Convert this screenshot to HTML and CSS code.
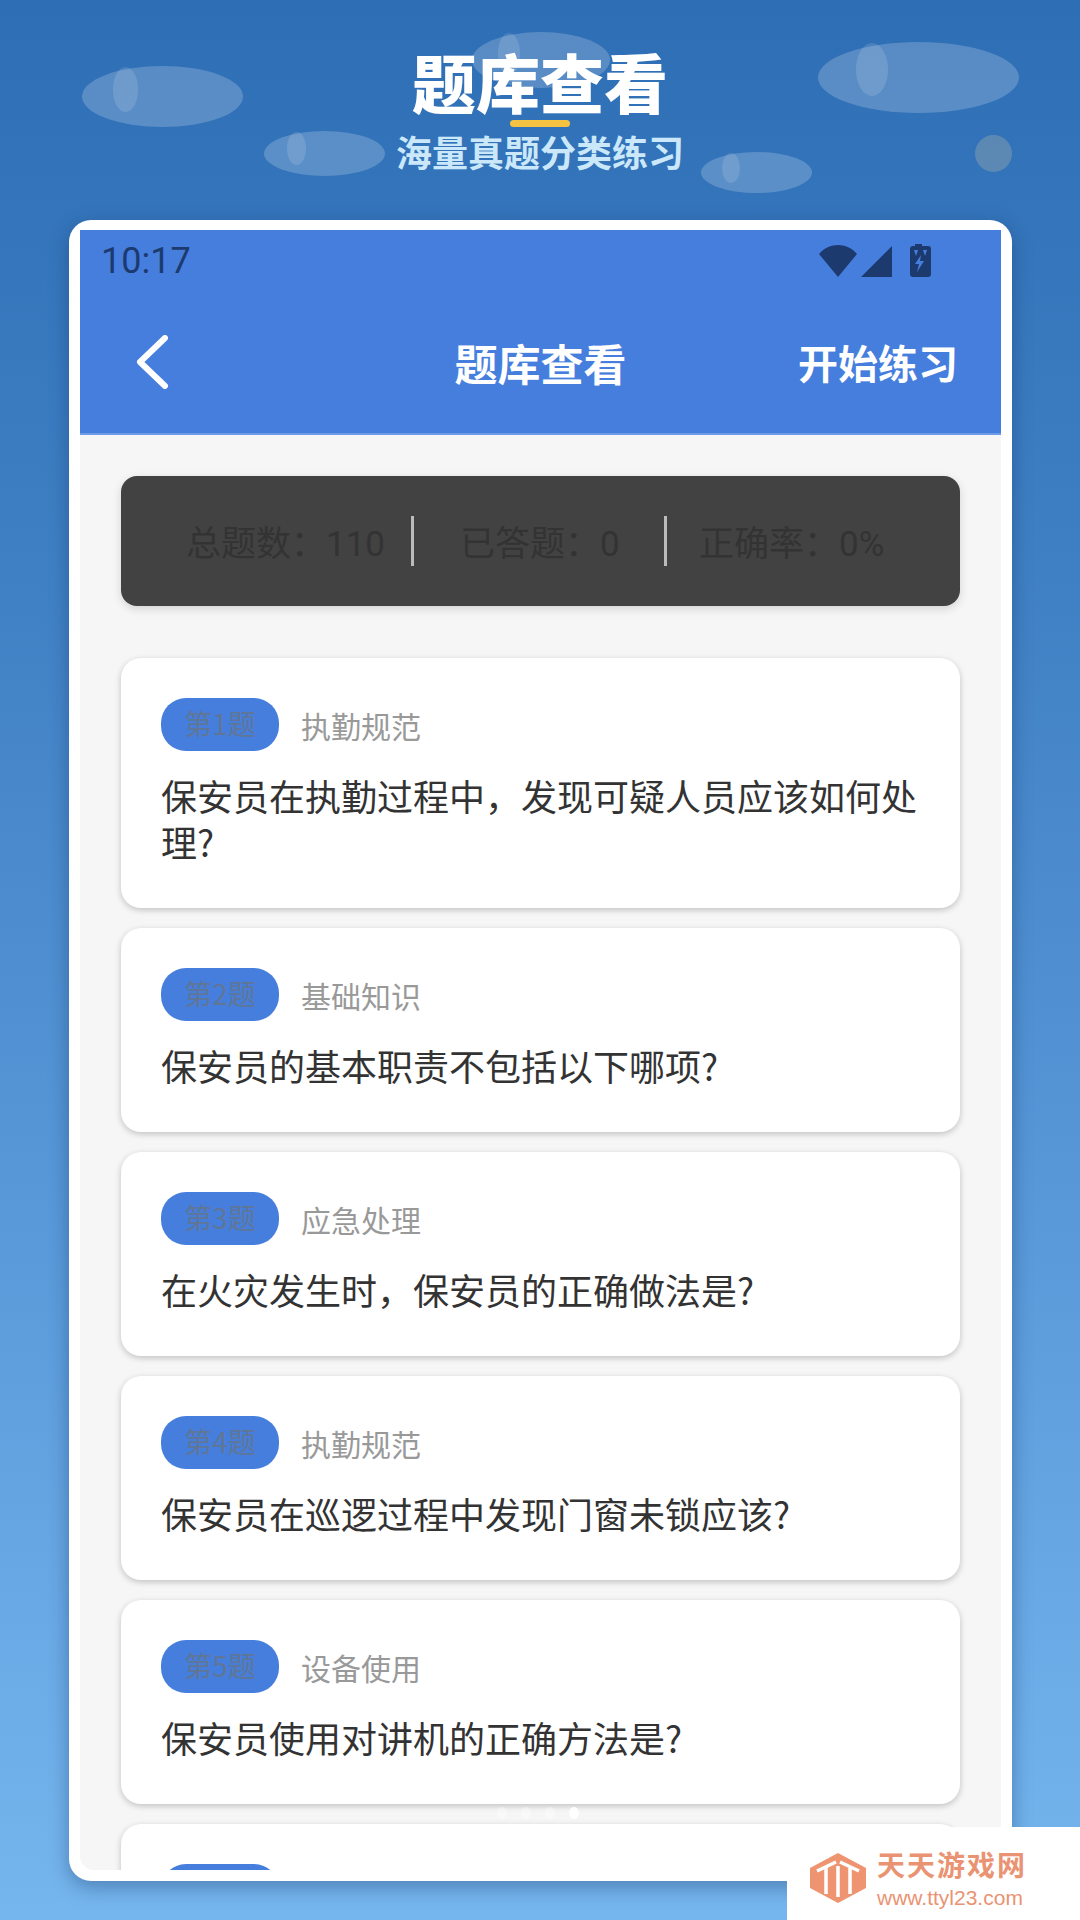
FILE: index.html
```html
<!DOCTYPE html>
<html lang="zh-CN">
<head>
  <meta charset="UTF-8" />
  <meta name="viewport" content="width=device-width, initial-scale=1.0" />
  <title>题库查看</title>
  <link rel="stylesheet" href="styles.css">
</head>
<body>

  <div class="bubble b1"></div>
  <div class="bubble b2"></div>
  <div class="bubble b3"></div>
  <div class="bubble b4"></div>
  <div class="bubble b5"></div>
  <div class="bubble b6"></div>

  <div class="hero">
    <h1>题库查看</h1>
    <div class="hero-line"></div>
    <h2>海量真题分类练习</h2>
  </div>

  <div class="phone">
    <div class="screen">
      <div class="top">
        <div class="status">
          <span class="clock">10:17</span>
          <svg class="status-icons" width="112" height="34" viewBox="0 0 112 34">
            <path d="M0 10 C10 -2 28 -2 38 10 L19 33 Z" />
            <path d="M42 33 L73 2 L73 33 Z" />
            <path fill-rule="evenodd" d="M96 0 H103 V2 H109 Q112 2 112 5 V30 Q112 33 109 33 H94 Q91 33 91 30 V5 Q91 2 94 2 H96 Z M102 11 L96 20 H100 L98 28 L105 17 H101 Z M95 6 L99 6 L97 12 Z M104 6 L108 6 L106 12 Z" />
          </svg>
        </div>
        <div class="nav">
          <svg class="back" width="34" height="54" viewBox="0 0 34 54">
            <path d="M30 3 L5 27 L30 51" />
          </svg>
          <span class="nav-title">题库查看</span>
          <span class="nav-action">开始练习</span>
        </div>
      </div>

      <div class="content">
        <div class="stats">
          <div class="stat">总题数&#xFF1A;<span class="num">110</span></div>
          <div class="stat">已答题&#xFF1A;<span class="num">0</span></div>
          <div class="stat">正确率&#xFF1A;<span class="num">0%</span></div>
        </div>

        <div class="card">
          <div class="card-head">
            <span class="badge">第1题</span>
            <span class="tag">执勤规范</span>
          </div>
          <p class="question">保安员在执勤过程中&#xFF0C;发现可疑人员应该如何处理?</p>
        </div>

        <div class="card">
          <div class="card-head">
            <span class="badge">第2题</span>
            <span class="tag">基础知识</span>
          </div>
          <p class="question">保安员的基本职责不包括以下哪项?</p>
        </div>

        <div class="card">
          <div class="card-head">
            <span class="badge">第3题</span>
            <span class="tag">应急处理</span>
          </div>
          <p class="question">在火灾发生时&#xFF0C;保安员的正确做法是?</p>
        </div>

        <div class="card">
          <div class="card-head">
            <span class="badge">第4题</span>
            <span class="tag">执勤规范</span>
          </div>
          <p class="question">保安员在巡逻过程中发现门窗未锁应该?</p>
        </div>

        <div class="card">
          <div class="card-head">
            <span class="badge">第5题</span>
            <span class="tag">设备使用</span>
          </div>
          <p class="question">保安员使用对讲机的正确方法是?</p>
        </div>

        <div class="card">
          <div class="card-head">
            <span class="badge"></span>
          </div>
        </div>
      </div>
    </div>
  </div>

  <div class="dots">
    <span></span><span></span><span></span><span class="on"></span>
  </div>

  <div class="mark">
    <svg class="mark-logo" width="58" height="50" viewBox="0 0 58 50">
      <path class="hex" d="M29 0 L57 15 V35 L29 50 L1 35 V15 Z" />
      <path class="hex-in" d="M8 18 L27 9 M17 14 V41 M31 9 L50 18 M41 14 V41 M29 13 V44" />
    </svg>
    <div class="mark-text">
      <b>天天游戏网</b>
      <span>www.ttyl23.com</span>
    </div>
  </div>

</body>
</html>
```

FILE: styles.css
```css
body {
  margin: 0;
  width: 1080px;
  height: 1920px;
  position: relative;
  overflow: hidden;
  font-family: "Noto Sans CJK SC", "Noto Sans", sans-serif;
  background: linear-gradient(180deg, #2e6eb5 0%, #3f80c4 30%, #5a9ada 65%, #76b6ee 100%);
}

/* bubbles behind the heading */
.bubble {
  position: absolute;
  border-radius: 50%;
  background-color: rgba(255, 255, 255, 0.2);
}

.bubble::before {
  content: '';
  position: absolute;
  top: 2%;
  left: 19%;
  width: 16%;
  height: 74%;
  border-radius: 50%;
  background-color: rgba(255, 255, 255, 0.13);
}

.b1 { left: 82px; top: 66px; width: 161px; height: 61px; }
.b2 { left: 472px; top: 32px; width: 138px; height: 56px; }
.b3 { left: 818px; top: 42px; width: 201px; height: 71px; }
.b4 { left: 264px; top: 131px; width: 121px; height: 45px; }
.b5 { left: 701px; top: 152px; width: 111px; height: 41px; }
.b6 { left: 975px; top: 135px; width: 37px; height: 37px; background-color: rgba(190, 190, 170, 0.3); }
.b6::before { display: none; }

.hero {
  position: relative;
  height: 220px;
  text-align: center;
  box-sizing: border-box;
  padding-top: 43px;
}

.hero h1 {
  margin: 0;
  height: 77px;
  font-size: 64px;
  line-height: 75px;
  font-weight: 900;
  color: #fff;
}

.hero-line {
  width: 60px;
  height: 7px;
  margin: 0 auto;
  border-radius: 4px;
  background-color: #f5c242;
}

.hero h2 {
  margin: 2px 0 0;
  font-size: 36px;
  line-height: 44px;
  font-weight: 700;
  color: #cbe8fb;
}

.phone {
  position: relative;
  box-sizing: border-box;
  width: 943px;
  height: 1661px;
  margin-left: 69px;
  padding: 10px 11px;
  background-color: #fff;
  border-radius: 22px;
  box-shadow: 0 6px 20px rgba(20, 50, 100, 0.4);
}

.screen {
  height: 1640px;
  overflow: hidden;
  background-color: #f6f6f6;
  border-bottom-left-radius: 14px;
}

.top {
  box-sizing: border-box;
  height: 205px;
  background-color: #467ede;
  border-bottom: 2px solid #6d9be8;
}

.status {
  display: flex;
  justify-content: space-between;
  align-items: center;
  height: 62px;
  padding: 0 70px 0 21px;
}

.clock {
  font-family: Roboto, sans-serif;
  font-size: 36px;
  color: #1c3a6e;
}

.status-icons {
  fill: #1c3a6e;
}

.nav {
  position: relative;
  display: flex;
  justify-content: space-between;
  align-items: center;
  height: 139px;
  padding: 0 43px 0 55px;
  color: #fff;
  font-weight: 700;
}

.back {
  fill: none;
  stroke: #fff;
  stroke-width: 6;
  stroke-linecap: round;
  stroke-linejoin: round;
}

.nav-title {
  position: absolute;
  left: 0;
  right: 0;
  text-align: center;
  font-size: 43px;
}

.nav-action {
  font-size: 40px;
}

.content {
  padding: 41px 41px 0;
}

.stats {
  display: grid;
  grid-template-columns: 293px 253px 1fr;
  align-items: center;
  height: 130px;
  margin-bottom: 52px;
  background-color: #424242;
  border-radius: 16px;
  box-shadow: 0 3px 10px rgba(0, 0, 0, 0.14);
}

.stat {
  height: 50px;
  line-height: 50px;
  font-size: 35px;
  white-space: nowrap;
  color: #333;
  border-right: 3px solid #bbb;
}

.stat:nth-child(1) { padding-left: 65px; }
.stat:nth-child(2) { padding-left: 46px; }
.stat:nth-child(3) { padding-left: 32px; border-right: none; }

.num {
  font-family: Roboto, sans-serif;
}

.card {
  box-sizing: border-box;
  padding: 40px 40px 42px;
  margin-bottom: 20px;
  background-color: #fff;
  border-radius: 20px;
  box-shadow: 0 2px 6px rgba(0, 0, 0, 0.22);
}

.card-head {
  display: flex;
  align-items: center;
  gap: 22px;
}

.badge {
  width: 118px;
  height: 53px;
  line-height: 51px;
  text-align: center;
  font-size: 28px;
  color: #5f7697;
  background-color: #467ede;
  border-radius: 25px;
}

.tag {
  font-size: 30px;
  color: #999;
}

.question {
  margin: 21px 0 2px;
  font-size: 36px;
  line-height: 46px;
  color: #333;
}

.dots {
  position: absolute;
  left: 497px;
  top: 1807px;
  display: flex;
  gap: 14px;
}

.dots span {
  width: 10px;
  height: 12px;
  border-radius: 50%;
  background-color: rgba(255, 255, 255, 0.35);
}

.dots .on {
  background-color: #fff;
}

/* site watermark, bottom right */
.mark {
  position: absolute;
  right: 0;
  bottom: 0;
  box-sizing: border-box;
  width: 293px;
  height: 93px;
  padding: 17px 0 0 22px;
  display: flex;
  gap: 10px;
  background-color: #fff;
}

.mark-logo {
  margin-top: 9px;
}

.hex {
  fill: #ef9470;
}

.hex-in {
  fill: none;
  stroke: #fff;
  stroke-width: 3.5;
}

.mark-text {
  display: flex;
  flex-direction: column;
  color: #ea9373;
}

.mark-text b {
  font-size: 28px;
  line-height: 41px;
  letter-spacing: 2px;
}

.mark-text span {
  margin-top: 1px;
  font-family: "Liberation Sans", sans-serif;
  font-size: 21px;
  line-height: 24px;
}
```
